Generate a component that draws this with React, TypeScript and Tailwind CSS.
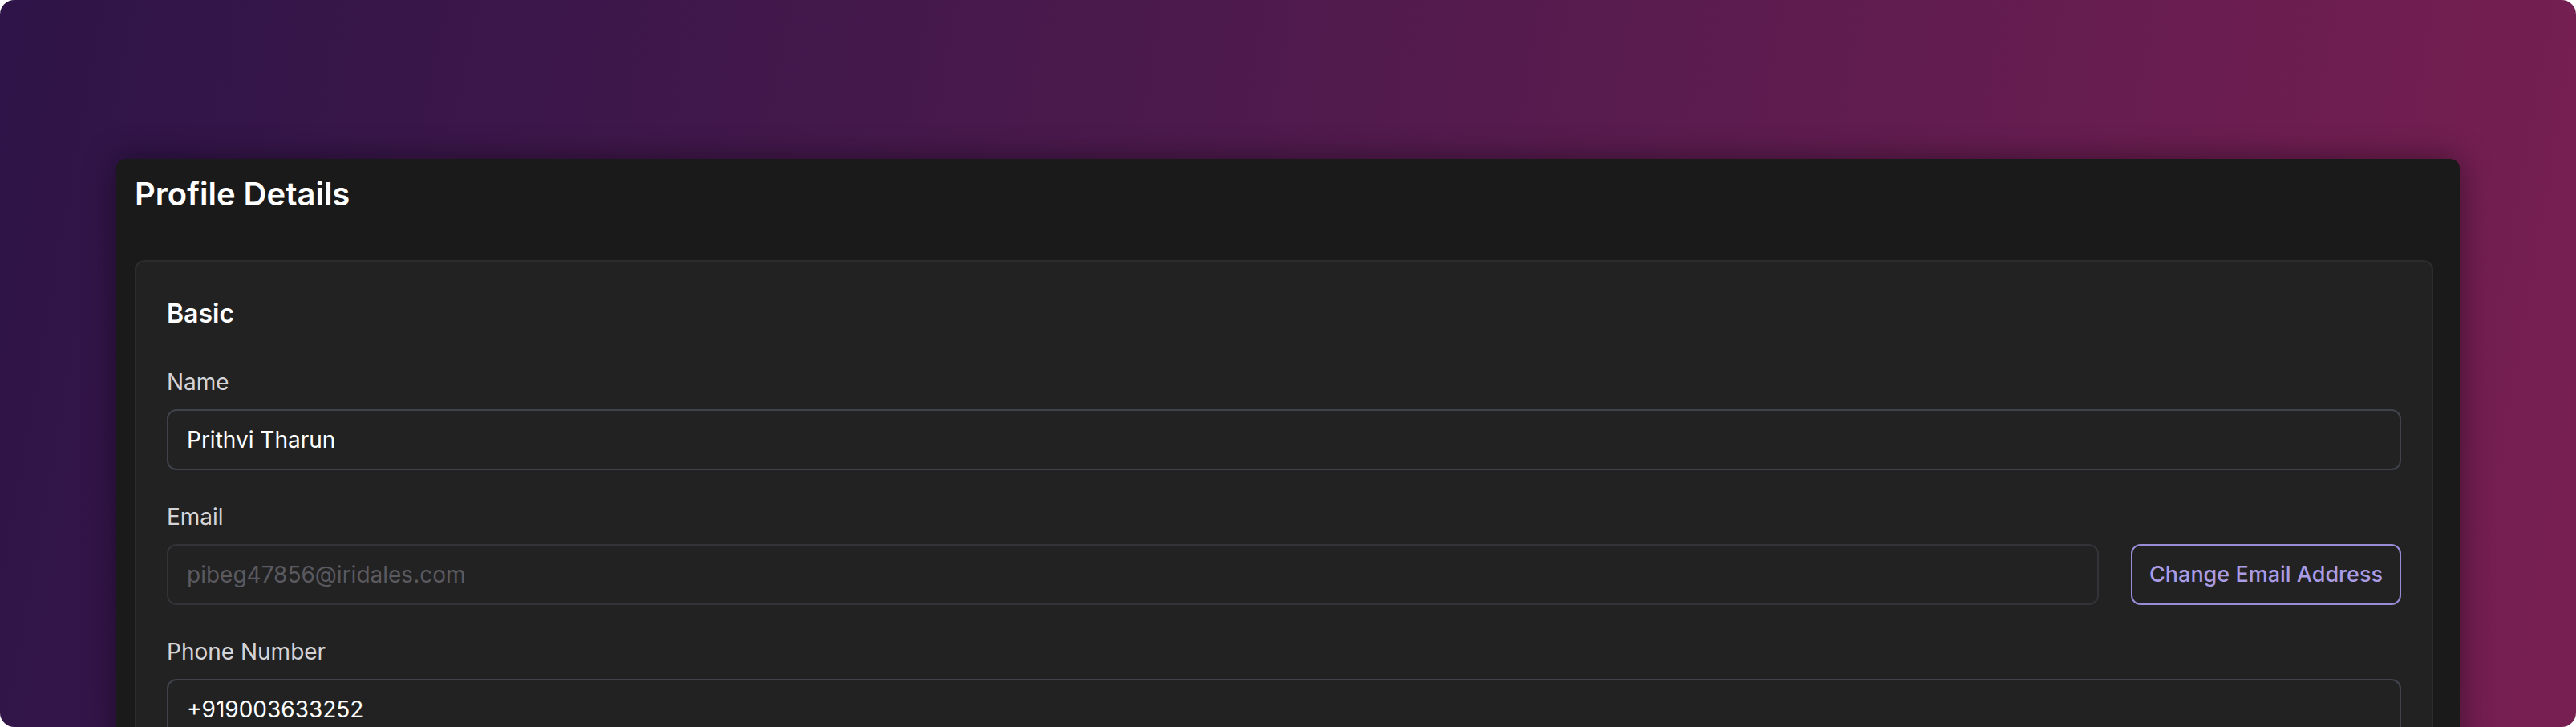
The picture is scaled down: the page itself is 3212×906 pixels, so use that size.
import React from 'react'

const inputBase =
  'h-[76px] w-full rounded-[12px] border-2 bg-[#222222] px-[23px] text-[28px] leading-[40px] outline-none'

const Field: React.FC<{ label: string; children: React.ReactNode }> = ({ label, children }) => (
  <div className="flex flex-col">
    <label className="mb-[12px] text-[28px] leading-[44px] text-[#d4d4d8]">{label}</label>
    {children}
  </div>
)

export default function App() {
  return (
    <div className="bg-white font-['Inter','Noto_Sans',sans-serif]">
      <div className="h-[906px] overflow-hidden rounded-[18px] bg-[linear-gradient(100deg,#2e1448_0%,#4d1a4d_45%,#781f52_100%)] px-[145px] pt-[198px]">
        <div className="rounded-[12px] bg-[#1a1a1a] pb-[40px] pl-[23px] pr-[33px] pt-[16px] shadow-[0_0_40px_rgba(0,0,0,0.45)]">
          <h1 className="mb-[54px] text-[40px] font-semibold leading-[56px] text-white">Profile Details</h1>

          <div className="rounded-[12px] border-2 border-[#2c2c2c] bg-[#222222] px-[38px] pb-[40px] pt-[41px]">
            <h2 className="mb-[39px] text-[32px] font-semibold leading-[48px] text-white">Basic</h2>

            <div className="flex flex-col gap-[36px]">
              <Field label="Name">
                <input
                  className={`${inputBase} border-[#41434c] text-white`}
                  defaultValue="Prithvi Tharun"
                />
              </Field>

              <Field label="Email">
                <div className="flex items-center gap-[40px]">
                  <input
                    disabled
                    className={`${inputBase} flex-1 border-[#333338] text-[#5a5a60]`}
                    defaultValue="pibeg47856@iridales.com"
                  />
                  <button
                    type="button"
                    className="h-[76px] shrink-0 rounded-[12px] border-2 border-[#9a8cd6] px-[21px] text-[27px] font-medium leading-[40px] text-[#a99ce4]"
                  >
                    Change Email Address
                  </button>
                </div>
              </Field>

              <Field label="Phone Number">
                <input className={`${inputBase} border-[#41434c] text-white`} defaultValue="+919003633252" />
              </Field>
            </div>
          </div>
        </div>
      </div>
    </div>
  )
}
